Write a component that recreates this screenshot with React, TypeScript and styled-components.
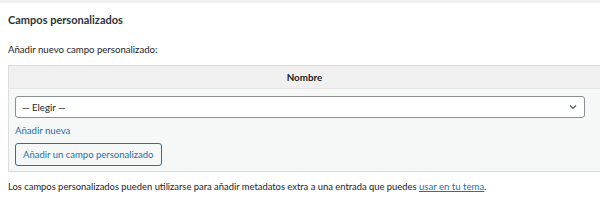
import React from "react";
import styled, { createGlobalStyle } from "styled-components";

const Global = createGlobalStyle`
  html, body { margin: 0; padding: 0; background: #f0f0f1; }
  body { font-family: "Lato", "Open Sans", sans-serif; color: #1d2327; }
  * { box-sizing: border-box; }
`;

const Panel = styled.div`
  margin-top: 3px;
  background: #fff;
  height: 208px;
  padding: 0 0 0 8px;
`;

const Title = styled.h2`
  margin: 0;
  padding: 9px 0 0;
  font-size: 11px;
  font-weight: 700;
  line-height: 15px;
  color: #2c3338;
`;

const Label = styled.p`
  margin: 16px 0 0;
  font-size: 9.6px;
  line-height: 14px;
`;

const Table = styled.div`
  margin-top: 8px;
  border: 1px solid #dcdcde;
  border-right: none;
  background: #f6f7f7;
  height: 107px;
`;

const Header = styled.div`
  height: 23px;
  background: #f0f0f1;
  border-bottom: 1px solid #e5e5e5;
  display: flex;
  align-items: center;
  justify-content: center;
  font-size: 9.8px;
  font-weight: 700;
`;

const Body = styled.div`
  padding: 7px 15px 0 6px;
  display: flex;
  flex-direction: column;
  align-items: flex-start;
`;

const Select = styled.div`
  width: 100%;
  height: 22px;
  border: 1px solid #8c8f94;
  border-radius: 3px;
  background: #fff;
  display: flex;
  align-items: center;
  justify-content: space-between;
  padding: 0 6px 0 6px;
  font-size: 9.6px;
`;

const Link = styled.a`
  color: #2271b1;
  font-size: 9.6px;
  text-decoration: ${(p: { $underline?: boolean }) => (p.$underline ? "underline" : "none")};
`;

const AddNew = styled(Link)`
  margin-top: 6px;
  line-height: 14px;
`;

const Button = styled.button`
  margin-top: 5px;
  height: 23px;
  padding: 0 7px;
  border: 1px solid #2271b1;
  border-radius: 3px;
  background: #f6f7f7;
  color: #2271b1;
  font-family: inherit;
  font-size: 9.5px;
`;

const Note = styled.p`
  margin: 8px 0 0;
  font-size: 9.4px;
  line-height: 14px;
`;

export default function App() {
  return (
    <>
      <Global />
      <Panel>
        <Title>Campos personalizados</Title>
        <Label>Añadir nuevo campo personalizado:</Label>
        <Table>
          <Header>Nombre</Header>
          <Body>
            <Select>
              <span>— Elegir —</span>
              <svg width="10" height="10" viewBox="0 0 10 10">
                <path d="M2 3.5 L5 6.5 L8 3.5" fill="none" stroke="#50575e" strokeWidth="1.2" />
              </svg>
            </Select>
            <AddNew href="#">Añadir nueva</AddNew>
            <Button>Añadir un campo personalizado</Button>
          </Body>
        </Table>
        <Note>
          Los campos personalizados pueden utilizarse para añadir metadatos extra a una entrada que puedes{" "}
          <Link href="#" $underline>usar en tu tema</Link>.
        </Note>
      </Panel>
    </>
  );
}
